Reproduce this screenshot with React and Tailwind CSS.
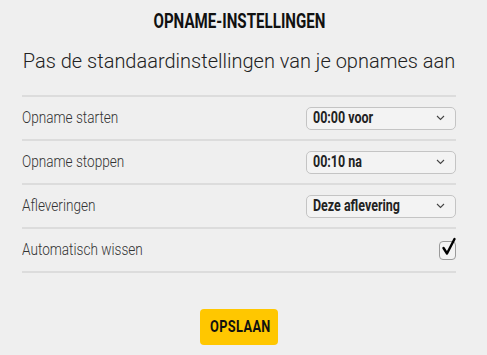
const rows = [
  { label: 'Opname starten', value: '00:00 voor' },
  { label: 'Opname stoppen', value: '00:10 na' },
  { label: 'Afleveringen', value: 'Deze aflevering' },
];

const roboto = { fontFamily: 'Roboto, "Liberation Sans", sans-serif' };

function Chevron() {
  return (
    <svg width="9" height="6" viewBox="0 0 9 6" fill="none" stroke="#444" strokeWidth="1.1">
      <path d="M1 1l3.5 3.5L8 1" />
    </svg>
  );
}

function Label({ children }) {
  return (
    <span className="inline-block origin-left scale-x-[0.8] text-[17px] font-light text-[#333]" style={roboto}>
      {children}
    </span>
  );
}

export default function App() {
  return (
    <div className="w-[487px] h-[355px] bg-[#efefef] overflow-hidden" style={roboto}>
      <div className="w-[478px] flex flex-col items-center">
        <h1 className="mt-[10px] inline-block scale-x-[0.72] text-[21px] leading-[22px] font-bold text-[#111] whitespace-nowrap">
          OPNAME-INSTELLINGEN
        </h1>
        <p className="mt-[17px] text-[20px] leading-[24px] font-light text-[#222] whitespace-nowrap">
          Pas de standaardinstellingen van je opnames aan
        </p>

        <div className="mt-[22px] w-[434px] border-t-2 border-[#dcdcdc]">
          {rows.map((r) => (
            <div key={r.label} className="h-[44px] flex items-center justify-between border-b-2 border-[#dcdcdc]">
              <Label>{r.label}</Label>
              <div className="w-[150px] h-[23px] flex items-center justify-between pl-[6px] pr-[10px] border border-[#c4c4c4] rounded-[5px] bg-[#f3f3f3]">
                <span className="inline-block origin-left scale-x-[0.78] text-[16px] font-bold text-[#222] whitespace-nowrap">
                  {r.value}
                </span>
                <Chevron />
              </div>
            </div>
          ))}
          <div className="h-[44px] flex items-center justify-between border-b-2 border-[#dcdcdc]">
            <Label>Automatisch wissen</Label>
            <div className="relative w-[17px] h-[19px] border border-[#9a9a9a] rounded-[4px] bg-[#f3f3f3]">
              <svg className="absolute -top-[5px] left-[1px]" width="16" height="19" viewBox="0 0 16 19" fill="none" stroke="#000" strokeWidth="2.4" strokeLinecap="round" strokeLinejoin="round">
                <path d="M2.5 11l3.5 5.5L13.5 2" />
              </svg>
            </div>
          </div>
        </div>

        <button className="mt-[36px] w-[78px] h-[36px] rounded-[4px] bg-[#ffc700] text-[#111]">
          <span className="inline-block scale-x-[0.75] text-[17px] font-bold tracking-[0.5px]">OPSLAAN</span>
        </button>
      </div>
    </div>
  );
}
